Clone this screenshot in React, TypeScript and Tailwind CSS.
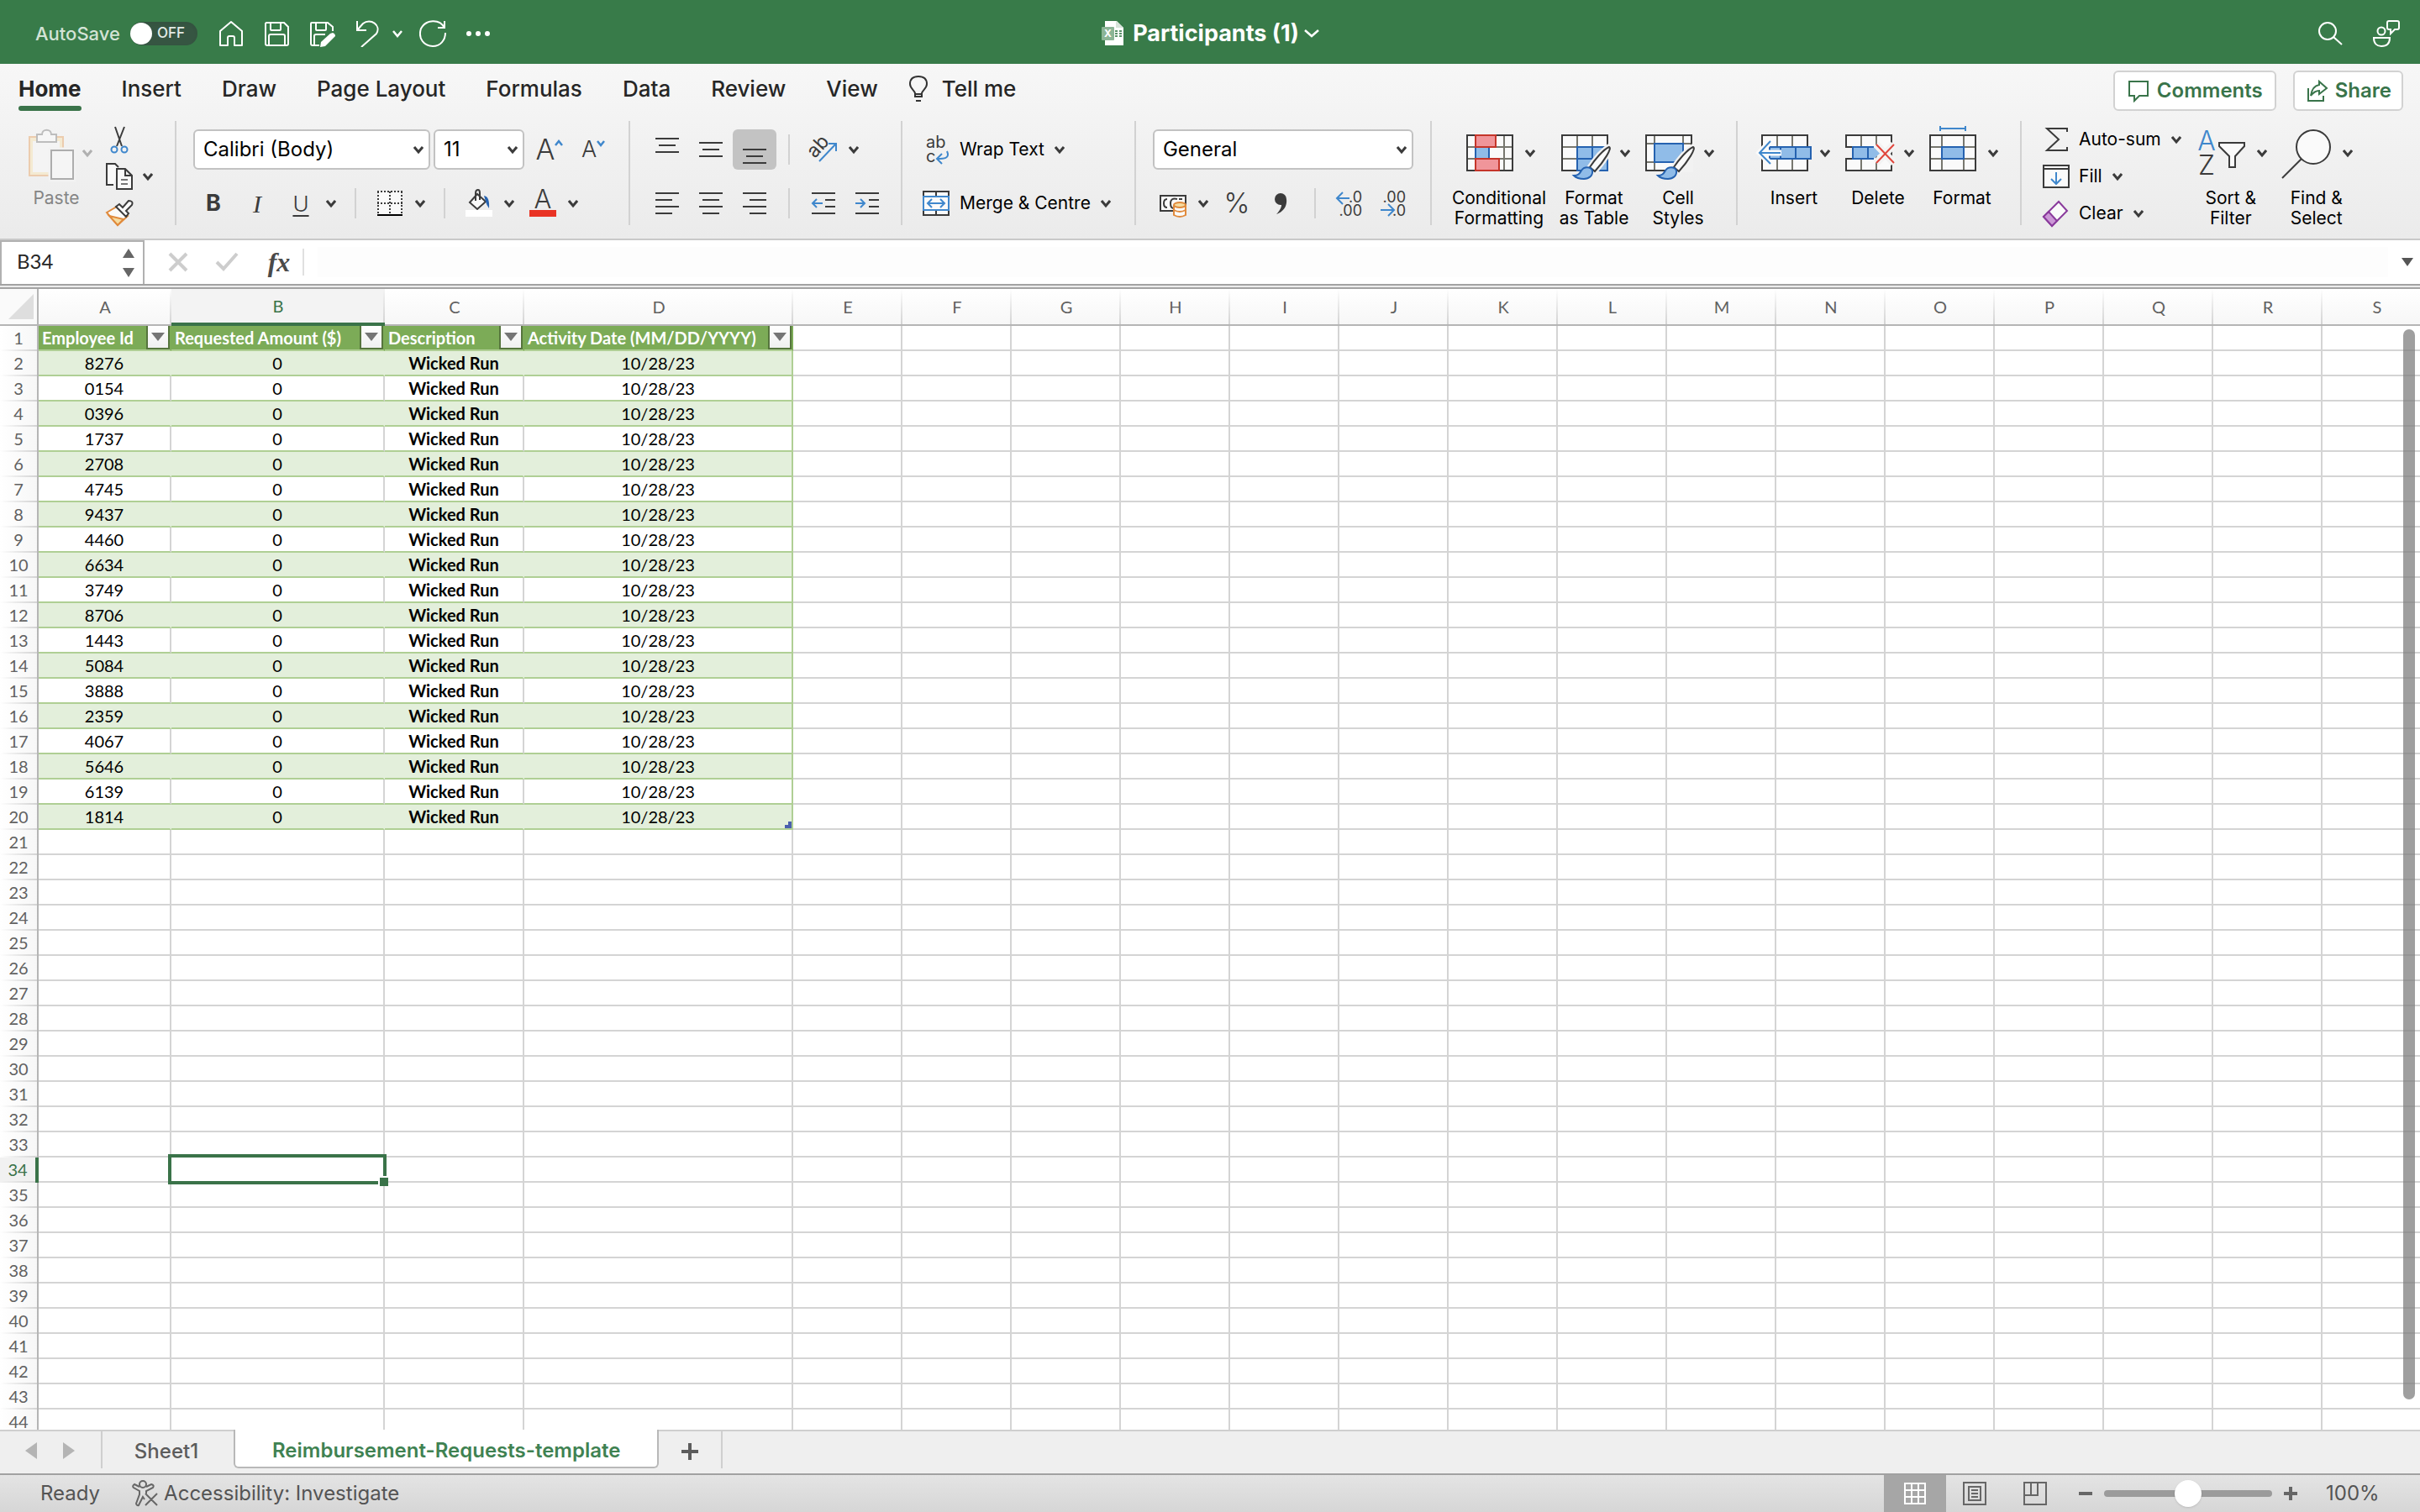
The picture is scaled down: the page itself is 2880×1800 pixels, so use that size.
import type { ReactNode } from 'react';

const ids = [
    '8276', '0154', '0396', '1737', '2708', '4745', '9437', '4460', '6634', '3749',
    '8706', '1443', '5084', '3888', '2359', '4067', '5646', '6139', '1814',
];

const tableHeads = ['Employee Id', 'Requested Amount ($)', 'Description', 'Activity Date (MM/DD/YYYY)'];
const columns = 'ABCDEFGHIJKLMNOPQRS'.split('');
const rows = Array.from({ length: 44 }, (_, i) => i + 1);
const tabs = ['Home', 'Insert', 'Draw', 'Page Layout', 'Formulas', 'Data', 'Review', 'View'];

interface IconProps {
    children: ReactNode;
    big?: boolean;
}

const Icon = ({ children, big }: IconProps) => (
    <svg
        viewBox={big ? '0 0 64 64' : '0 0 32 32'}
        className={big ? 'size-16 shrink-0 overflow-visible' : 'size-8 shrink-0 overflow-visible'}
        fill="none"
        stroke="#3b3b3b"
        strokeWidth="2"
        aria-hidden="true"
    >
        {children}
    </svg>
);

const Chevron = ({ faded }: { faded?: boolean }) => (
    <svg viewBox="0 0 12 12" className="size-3 shrink-0" fill="none" stroke={faded ? '#b0b0b0' : '#3b3b3b'} strokeWidth="3" aria-hidden="true">
        <path d="M1 3l5 6 5-6" />
    </svg>
);

interface ToolProps {
    label: string;
    children: ReactNode;
    active?: boolean;
}

const Tool = ({ label, children, active }: ToolProps) => (
    <button
        aria-label={label}
        className={`flex h-12 w-[52px] shrink-0 items-center justify-center rounded-md text-[#3b3b3b] ${active ? 'bg-[#c3c3c3]' : ''}`}
    >
        {children}
    </button>
);

const More = ({ label }: { label: string }) => (
    <button aria-label={label} className="mr-1 flex h-12 w-5 shrink-0 items-center justify-center">
        <Chevron />
    </button>
);

const Separator = () => <div className="mx-3.5 h-9 w-0.5 shrink-0 bg-[#d2d2d2]" />;

interface BigToolProps {
    icon: ReactNode;
    lines: string[];
    faded?: boolean;
}

const BigTool = ({ icon, lines, faded }: BigToolProps) => (
    <button className={`flex flex-col items-center pt-1.5 text-[21px] leading-6 ${faded ? 'text-[#858585]' : 'text-black'}`}>
        <span className="mb-2.5 flex items-center gap-2.5">
            {icon}
            <Chevron faded={faded} />
        </span>
        {lines.map((line) => (
            <span key={line} className="whitespace-nowrap">{line}</span>
        ))}
    </button>
);

const TextTool = ({ icon, text }: { icon: ReactNode; text: string }) => (
    <button className="flex items-center gap-3 text-[21px] whitespace-nowrap text-black">
        {icon}
        {text}
        <Chevron />
    </button>
);

interface PickerProps {
    label: string;
    value: string;
    width: string;
}

const Picker = ({ label, value, width }: PickerProps) => (
    <div className={`relative flex h-12 shrink-0 items-center ${width}`}>
        <select
            aria-label={label}
            defaultValue={value}
            className="h-full w-full appearance-none rounded-md border-2 border-[#c2c2c2] bg-white pl-2.5 text-2xl text-black"
        >
            <option>{value}</option>
        </select>
        <span className="pointer-events-none absolute right-2">
            <Chevron />
        </span>
    </div>
);

const Lines = ({ rows }: { rows: [number, number, number][] }) => (
    <Icon>
        {rows.map(([y, x1, x2]) => (
            <path key={y} d={`M${x1} ${y}H${x2}`} />
        ))}
    </Icon>
);

const Brush = () => (
    <>
        <path d="M37 51C44 40 53 29 62 24C65 27 55 41 44 54z" fill="#fafafa" stroke="#f2f2f2" strokeWidth="7" />
        <path d="M38 49C44 40 54 28 61 25C65 26 55 42 44 54z" fill="#fafafa" />
        <path d="M19 59C25 59 26 56 28 53C31 48 39 48 41 53C42 59 37 63 31 63C26 63 22 62 19 59z" fill="#90bce8" stroke="#2562b0" />
    </>
);

const TitleBar = () => (
    <header className="grid h-19 shrink-0 grid-cols-[1fr_auto_1fr] items-center bg-[#387b49] pb-1 pt-2 text-white">
        <div className="flex items-center pl-[42px]">
            <span className="mr-3 text-[22px] font-medium text-[#d3e3d6]">AutoSave</span>
            <button role="switch" aria-checked="false" aria-label="AutoSave" className="flex h-7 w-20 items-center gap-1.5 rounded-full bg-[#365542] shadow-inner">
                <span className="size-[26px] rounded-full bg-white" />
                <span className="text-[17px] font-medium text-[#e3eae5]">OFF</span>
            </button>
            <div className="ml-6 flex items-center gap-[22px]">
                <button aria-label="Home">
                    <svg viewBox="0 0 32 32" className="size-8" fill="none" stroke="white" strokeWidth="2">
                        <path d="M3 13L16 2L29 13V30H20V21Q20 19 18 19H14Q12 19 12 21V30H3z" strokeLinejoin="round" />
                    </svg>
                </button>
                <button aria-label="Save">
                    <svg viewBox="0 0 32 32" className="size-8" fill="none" stroke="white" strokeWidth="2">
                        <path d="M4 3H25L30 8V28Q30 30 28 30H5Q3 30 3 28V4zM9 3V11Q9 12 10 12H20Q21 12 21 11V3M7 30V19Q7 17 9 17H24Q26 17 26 19V30" />
                    </svg>
                </button>
                <button aria-label="Save as">
                    <svg viewBox="0 0 32 32" className="size-8" fill="none" stroke="white" strokeWidth="2">
                        <path d="M13 30H5Q3 30 3 28V4Q3 3 4 3H23L29 8V13M9 3V11Q9 12 10 12H20Q21 12 21 11V3M7 30V19Q7 17 9 17H20" />
                        <path d="M29 15Q32 16 32 19L20 31L14 32L15 26L26 16z" fill="white" stroke="none" />
                    </svg>
                </button>
                <button aria-label="Undo">
                    <svg viewBox="0 0 32 32" className="size-8" fill="none" stroke="white" strokeWidth="2">
                        <path d="M4 1V12H15M4 12L11 4C20 -3 33 6 27 16L9 32" />
                    </svg>
                </button>
            </div>
            <button aria-label="Undo history" className="ml-3.5">
                <svg viewBox="0 0 12 12" className="size-3" fill="none" stroke="white" strokeWidth="2.5">
                    <path d="M1 3l5 6 5-6" />
                </svg>
            </button>
            <button aria-label="Repeat" className="ml-5">
                <svg viewBox="0 0 32 32" className="size-8" fill="none" stroke="white" strokeWidth="2">
                    <path d="M30 1V9H22M30 9C24 -2 8 -1 2 10C-2 22 6 31 16 31C25 31 31 24 31 15" />
                </svg>
            </button>
            <button aria-label="More commands" className="ml-6">
                <svg viewBox="0 0 28 6" className="h-1.5 w-7" fill="white">
                    <circle cx="3" cy="3" r="3" />
                    <circle cx="14" cy="3" r="3" />
                    <circle cx="25" cy="3" r="3" />
                </svg>
            </button>
        </div>
        <button className="flex items-center gap-2.5 text-[27px] font-bold">
            <svg viewBox="0 0 28 30" className="h-[30px] w-7" aria-hidden="true">
                <path d="M5 0H19L27 8V29H5z" fill="white" />
                <path d="M18 0L27 8H18z" fill="#d7e4da" />
                <path d="M17 12h3M22 12h3M17 15h3M22 15h3M17 18h3M22 18h3" stroke="#5b9169" strokeWidth="2" />
                <rect x="1" y="7" width="15" height="16" rx="1" fill="#8cb596" />
                <text x="8.5" y="19" fill="white" fontSize="12" fontWeight="700" textAnchor="middle">X</text>
            </svg>
            <span>Participants (1)</span>
            <svg viewBox="0 0 18 12" className="-ml-1 h-3 w-4.5" fill="none" stroke="white" strokeWidth="2.5" aria-hidden="true">
                <path d="M1 2l8 7 8-7" />
            </svg>
        </button>
        <div className="flex items-center justify-end gap-9 pr-6">
            <button aria-label="Search">
                <svg viewBox="0 0 30 30" className="size-[30px]" fill="none" stroke="white" strokeWidth="2">
                    <circle cx="12" cy="12" r="10" />
                    <path d="M19 19L29 28" />
                </svg>
            </button>
            <button aria-label="Collaborate">
                <svg viewBox="0 0 32 32" className="size-8" fill="none" stroke="white" strokeWidth="2">
                    <circle cx="10" cy="13" r="4.5" />
                    <path d="M1 21H20C20 28 16 31 10 31C5 31 1 28 1 21z" />
                    <path d="M19 1H29Q31 1 31 3V9Q31 11 29 11H26L21 16V11H19Q17 11 17 9V3Q17 1 19 1z" />
                </svg>
            </button>
        </div>
    </header>
);

const TabRow = () => (
    <div className="flex h-17 items-start justify-between pr-5 pl-[22px]">
        <nav className="flex items-start gap-12 pt-3.5">
            {tabs.map((tab, index) => (
                <button key={tab} className={`text-[26px] leading-8 whitespace-nowrap text-[#262626] ${index === 0 ? 'font-bold' : 'font-medium'}`}>
                    {tab}
                    {index === 0 && <span className="mt-1 block h-1.5 rounded-full bg-[#3a7349]" />}
                </button>
            ))}
            <button className="-ml-3 flex items-center gap-4 text-[26px] leading-8 font-medium whitespace-nowrap text-[#262626]">
                <svg viewBox="0 0 24 32" className="h-8 w-6" fill="none" stroke="#333" strokeWidth="2" aria-hidden="true">
                    <path d="M8 25V21C7 17 2 15 2 10C2 4 6 1 12 1C18 1 22 4 22 10C22 15 17 17 16 21V25zM8 22H16M9 30H15" />
                </svg>
                Tell me
            </button>
        </nav>
        <div className="flex gap-5 pt-2">
            <button className="flex h-12 items-center gap-2 rounded-md border-2 border-[#d2d2d2] bg-white px-3.5 text-2xl font-semibold text-[#39744a]">
                <svg viewBox="0 0 28 28" className="size-7" fill="none" stroke="#39744a" strokeWidth="2" aria-hidden="true">
                    <path d="M3 3H25V20H15L9 26V20H3z" />
                </svg>
                Comments
            </button>
            <button className="flex h-12 items-center gap-2 rounded-md border-2 border-[#d2d2d2] bg-white px-3 text-2xl font-semibold text-[#39744a]">
                <svg viewBox="0 0 28 28" className="size-7" fill="none" stroke="#39744a" strokeWidth="2" aria-hidden="true">
                    <path d="M4 11V26H22V20M17 3L26 11L17 18V14C13 14 10 16 7 20C8 13 11 8 17 7z" />
                </svg>
                Share
            </button>
        </div>
    </div>
);

const Clipboard = () => (
    <section className="flex gap-4 pr-[26px] pl-6">
        <BigTool
            faded
            lines={['Paste']}
            icon={
                <Icon big>
                    <path d="M11 13H51V59H11z" fill="#f4ead2" stroke="#ecccae" />
                    <path d="M15 18H47V55H15z" fill="#f4f4f4" stroke="none" />
                    <path d="M20 10H26C26 3 37 3 37 10H43V19H20z" fill="#f6f6f6" stroke="#bdbdbd" />
                    <path d="M37 29H63V63H37z" fill="#f5f5f5" stroke="#f2f2f2" strokeWidth="7" />
                    <path d="M37 29H63V63H37z" fill="#f5f5f5" stroke="#adadad" />
                </Icon>
            }
        />
        <div className="flex flex-col *:h-11 *:shrink-0">
            <button aria-label="Cut" className="flex items-center">
                <Icon>
                    <path d="M11 1L19 24M22 1L13 24" />
                    <circle cx="10" cy="28" r="3.5" stroke="#3f87cc" />
                    <circle cx="22" cy="28" r="3.5" stroke="#3f87cc" />
                </Icon>
            </button>
            <button aria-label="Copy" className="flex items-center gap-3">
                <Icon>
                    <path d="M9 26H1V1H11L15 5" fill="#fafafa" />
                    <path d="M13 7H23L31 15V31H13zM23 7V15H31" fill="#fafafa" />
                    <path d="M18 20H26M18 25H26" stroke="#777" />
                </Icon>
                <Chevron />
            </button>
            <button aria-label="Format painter" className="flex items-center">
                <Icon>
                    <path d="M1 15L13 8L26 19L14 30z" fill="#fafafa" stroke="#e08a3c" />
                    <path d="M4 19L21 23L14 30z" fill="#f6dca0" stroke="#e08a3c" />
                    <path d="M12 8L16 5L20 9L27 1Q33 1 31 6L24 13L27 16L24 20z" fill="#fafafa" />
                </Icon>
            </button>
        </div>
    </section>
);

const FontGroup = () => (
    <section className="flex flex-col gap-4 pt-2.5 pr-4 pl-[18px]">
        <div className="flex items-center">
            <div className="mr-1 ml-0.5 flex gap-1">
                <Picker label="Font" value="Calibri (Body)" width="w-[282px]" />
                <Picker label="Font size" value="11" width="w-[108px]" />
            </div>
            <Tool label="Increase font size">
                <span className="text-[34px] leading-8 font-light">A</span>
                <svg viewBox="0 0 10 24" className="h-6 w-2.5" fill="none" stroke="#3f87cc" strokeWidth="2.5">
                    <path d="M1 7l4-5 4 5" />
                </svg>
            </Tool>
            <Tool label="Decrease font size">
                <span className="text-[27px] leading-8 font-light">A</span>
                <svg viewBox="0 0 10 24" className="h-6 w-2.5" fill="none" stroke="#3f87cc" strokeWidth="2.5">
                    <path d="M1 2l4 5 4-5" />
                </svg>
            </Tool>
        </div>
        <div className="flex items-center">
            <Tool label="Bold"><span className="text-[27px] font-bold">B</span></Tool>
            <Tool label="Italic"><span className="font-['Liberation_Serif',serif] text-[30px] italic">I</span></Tool>
            <Tool label="Underline"><span className="text-[26px] font-light underline decoration-2 underline-offset-4">U</span></Tool>
            <More label="Underline options" />
            <Separator />
            <Tool label="Borders">
                <Icon>
                    <path d="M2 2H30V30H2z" fill="#fafafa" stroke="none" />
                    <path d="M1 2H31M2 2V28M30 2V28M16 2V28M1 16H31" strokeDasharray="2 2" />
                    <path d="M1 30H31" stroke="black" />
                </Icon>
            </Tool>
            <More label="Border options" />
            <Separator />
            <Tool label="Fill colour">
                <Icon>
                    <path d="M14 5L5 15L14 23L24 14z" fill="#fafafa" />
                    <path d="M12 13V4Q12 0 15 0Q17 0 17 4V12" />
                    <path d="M22 7Q29 8 28 22Q25 18 24 14z" fill="#2562b0" stroke="none" />
                    <path d="M0 28H32" stroke="white" strokeWidth="8" />
                </Icon>
            </Tool>
            <More label="Fill colour options" />
            <Tool label="Font colour">
                <Icon>
                    <text x="16" y="22" fill="#3b3b3b" stroke="none" fontSize="31" fontWeight="300" textAnchor="middle">A</text>
                    <path d="M0 28H32" stroke="#e93324" strokeWidth="8" />
                </Icon>
            </Tool>
            <More label="Font colour options" />
        </div>
    </section>
);

const AlignGroup = () => (
    <section className="flex flex-col gap-4 pt-2.5 pr-3.5 pl-[18px]">
        <div className="flex items-center">
            <Tool label="Align top"><Lines rows={[[3, 2, 30], [11, 6, 26], [19, 2, 30]]} /></Tool>
            <Tool label="Align middle"><Lines rows={[[8, 2, 30], [16, 6, 26], [24, 2, 30]]} /></Tool>
            <Tool label="Align bottom" active><Lines rows={[[16, 2, 30], [24, 6, 26], [32, 2, 30]]} /></Tool>
            <Separator />
            <Tool label="Orientation">
                <Icon>
                    <text x="3" y="25" fill="#3b3b3b" stroke="none" fontSize="23" transform="rotate(-48 7 23)">ab</text>
                    <path d="M11 30L31 9M22 9H31V18" stroke="#3f87cc" />
                </Icon>
            </Tool>
            <More label="Orientation options" />
        </div>
        <div className="flex items-center">
            <Tool label="Align left"><Lines rows={[[4, 2, 30], [12, 2, 22], [20, 2, 30], [28, 2, 22]]} /></Tool>
            <Tool label="Centre"><Lines rows={[[4, 2, 30], [12, 6, 26], [20, 2, 30], [28, 6, 26]]} /></Tool>
            <Tool label="Align right"><Lines rows={[[4, 2, 30], [12, 10, 30], [20, 2, 30], [28, 10, 30]]} /></Tool>
            <Separator />
            <Tool label="Decrease indent">
                <Icon>
                    <path d="M2 4H30M18 12H30M18 20H30M2 28H30" />
                    <path d="M15 16H4M8 11L3 16L8 21" stroke="#3f87cc" />
                </Icon>
            </Tool>
            <Tool label="Increase indent">
                <Icon>
                    <path d="M2 4H30M18 12H30M18 20H30M2 28H30" />
                    <path d="M2 16H13M8 11L13 16L8 21" stroke="#3f87cc" />
                </Icon>
            </Tool>
        </div>
    </section>
);

const WrapGroup = () => (
    <section className="flex flex-col gap-4 pt-2.5 pr-7 pl-6">
        <div className="flex h-12 items-center">
            <TextTool
                text="Wrap Text"
                icon={
                    <Icon>
                        <text x="4" y="14" fill="#3b3b3b" stroke="none" fontSize="20">ab</text>
                        <text x="4" y="31" fill="#3b3b3b" stroke="none" fontSize="20">c</text>
                        <path d="M29 18C33 27 25 27 17 27M23 21L17 27L23 33" stroke="#3f87cc" />
                    </Icon>
                }
            />
        </div>
        <div className="flex h-12 items-center">
            <TextTool
                text="Merge & Centre"
                icon={
                    <Icon>
                        <path d="M1 2H31V30H1zM16 2V30" fill="#fafafa" />
                        <path d="M1 8H31V24H1z" fill="#fafafa" stroke="#3f87cc" />
                        <path d="M6 16H26M11 11L6 16L11 21M21 11L26 16L21 21" stroke="#3f87cc" />
                    </Icon>
                }
            />
        </div>
    </section>
);

const NumberGroup = () => (
    <section className="flex flex-col gap-4 px-5 pt-2.5">
        <Picker label="Number format" value="General" width="w-[310px]" />
        <div className="-mx-0.5 flex items-center">
            <Tool label="Accounting format">
                <Icon>
                    <path d="M1 7H31V25H1z" fill="#fafafa" />
                    <path d="M9 11Q5 11 5 16Q5 21 9 21M21 11Q13 9 13 16Q13 21 16 22M23 11H27" />
                    <path d="M17 18V30Q24 34 31 30V18" fill="#fafafa" stroke="#e08a3c" />
                    <ellipse cx="24" cy="18" rx="7" ry="3" fill="#f6dca0" stroke="#e08a3c" />
                    <path d="M17 24Q24 28 31 24" stroke="#e08a3c" />
                </Icon>
            </Tool>
            <More label="Accounting options" />
            <Tool label="Percent"><span className="text-[33px] font-light">%</span></Tool>
            <Tool label="Comma style">
                <Icon>
                    <circle cx="16" cy="11" r="7" fill="#3b3b3b" stroke="none" />
                    <path d="M23 11C24 20 19 26 11 29C15 25 18 20 17 15z" fill="#3b3b3b" stroke="none" />
                </Icon>
            </Tool>
            <Separator />
            <Tool label="Increase decimal">
                <Icon>
                    <text x="31" y="15" fill="#3b3b3b" stroke="none" fontSize="18" textAnchor="end">.0</text>
                    <text x="31" y="31" fill="#3b3b3b" stroke="none" fontSize="18" textAnchor="end">.00</text>
                    <path d="M16 10H1M8 3L1 10L8 17" stroke="#3f87cc" />
                </Icon>
            </Tool>
            <Tool label="Decrease decimal">
                <Icon>
                    <text x="31" y="15" fill="#3b3b3b" stroke="none" fontSize="18" textAnchor="end">.00</text>
                    <text x="31" y="31" fill="#3b3b3b" stroke="none" fontSize="18" textAnchor="end">.0</text>
                    <path d="M1 24H17M10 17L17 24L10 31" stroke="#3f87cc" />
                </Icon>
            </Tool>
        </div>
    </section>
);

const StylesGroup = () => (
    <section className="flex gap-3.5 pr-[26px] pl-6">
        <BigTool
            lines={['Conditional', 'Formatting']}
            icon={
                <Icon big>
                    <path d="M5 11H59V53H5z" fill="#fafafa" stroke="none" />
                    <path d="M5 25H59M5 39H59M15 11V53M49 11V53" stroke="#77776f" />
                    <path d="M5 11H59V53H5z" />
                    <path d="M15 25H31V39H15z" fill="#90bce8" stroke="#2562b0" />
                    <path d="M15 11H39V25H15zM15 39H43V53H15z" fill="#f0959a" stroke="#c5352a" />
                </Icon>
            }
        />
        <BigTool
            lines={['Format', 'as Table']}
            icon={
                <Icon big>
                    <path d="M5 11H59V53H5z" fill="#fafafa" stroke="none" />
                    <path d="M5 25H59M5 39H59M23 11V53M41 11V53" stroke="#77776f" />
                    <path d="M5 11H59V53H5z" />
                    <path d="M23 25H59V53H23zM23 39H59M41 25V53" fill="#90bce8" stroke="#2562b0" />
                    <Brush />
                </Icon>
            }
        />
        <BigTool
            lines={['Cell', 'Styles']}
            icon={
                <Icon big>
                    <path d="M5 11H59V53H5z" fill="#fafafa" stroke="none" />
                    <path d="M5 21H59M5 43H59M15 11V53M49 11V53" stroke="#77776f" />
                    <path d="M5 11H59V53H5z" />
                    <path d="M15 21H49V43H15z" fill="#90bce8" stroke="#2562b0" />
                    <path d="M61 30V55H40z" fill="#f2f2f2" stroke="none" />
                    <Brush />
                </Icon>
            }
        />
    </section>
);

const CellsGroup = () => (
    <section className="flex gap-3.5 pr-[26px] pl-6">
        <BigTool
            lines={['Insert']}
            icon={
                <Icon big>
                    <path d="M5 11H59V53H5z" fill="#fafafa" />
                    <path d="M23 12V52M41 12V52" stroke="#77776f" />
                    <path d="M14 25H63V39H14z" fill="#90bce8" stroke="#2562b0" />
                    <path d="M27 25V39M45 25V39" stroke="#2562b0" />
                    <path d="M28 32H2M15 18L2 32L15 45" stroke="#fafafa" strokeWidth="7" />
                    <path d="M27 32H2M15 18L2 32L15 45" stroke="#3f87cc" />
                </Icon>
            }
        />
        <BigTool
            lines={['Delete']}
            icon={
                <Icon big>
                    <path d="M5 25V11H59V53H5V39H14V25z" fill="#fafafa" />
                    <path d="M23 12V52M41 12V52" stroke="#77776f" />
                    <path d="M13 25H38L46 32L38 39H13z" fill="#90bce8" stroke="none" />
                    <path d="M38 25H13V39H38M31 25V39" stroke="#2562b0" />
                    <path d="M41 22L62 44M62 22L41 44" stroke="#f3f3f3" strokeWidth="9" />
                    <path d="M41 22L62 44M62 22L41 44" stroke="#e0463c" />
                </Icon>
            }
        />
        <BigTool
            lines={['Format']}
            icon={
                <Icon big>
                    <path d="M5 11H59V53H5z" fill="#fafafa" stroke="none" />
                    <path d="M5 25H59M5 39H59M19 11V53M45 11V53" stroke="#77776f" />
                    <path d="M5 11H59V53H5z" />
                    <path d="M19 25H45V39H19z" fill="#90bce8" stroke="#2562b0" />
                    <path d="M17 3H47M17 0V6M47 0V6" stroke="#3f87cc" />
                </Icon>
            }
        />
    </section>
);

const EditingGroup = () => (
    <section className="flex gap-4 px-6">
        <div className="flex flex-col *:h-11 *:shrink-0">
            <TextTool
                text="Auto-sum"
                icon={<Icon><path d="M30 7V3H6L20 16L6 29H30V25" /></Icon>}
            />
            <TextTool
                text="Fill"
                icon={
                    <Icon>
                        <path d="M2 3H32V29H2z" fill="#fafafa" />
                        <path d="M2 7H32" />
                        <path d="M17 11V25M11 19L17 25L23 19" stroke="#3f87cc" />
                    </Icon>
                }
            />
            <TextTool
                text="Clear"
                icon={
                    <Icon>
                        <path d="M2 20L20 2L30 13L12 31z" fill="#fafafa" stroke="#8a3a9c" />
                        <path d="M2 20L8 14L18 25L12 31z" fill="#cb97d6" stroke="#8a3a9c" />
                    </Icon>
                }
            />
        </div>
        <BigTool
            lines={['Sort &', 'Filter']}
            icon={
                <Icon big>
                    <text x="14" y="29" fill="#3f87cc" stroke="none" fontSize="32" fontWeight="300" textAnchor="middle">A</text>
                    <text x="14" y="58" fill="#3b3b3b" stroke="none" fontSize="32" fontWeight="300" textAnchor="middle">Z</text>
                    <path d="M29 20H59V24L48 36V49H41V36L29 24z" fill="#fafafa" />
                </Icon>
            }
        />
        <BigTool
            lines={['Find &', 'Select']}
            icon={
                <Icon big>
                    <circle cx="39" cy="25" r="20" fill="#fafafa" />
                    <path d="M25 39L2 62" />
                </Icon>
            }
        />
    </section>
);

const FormulaBar = () => (
    <div className="flex h-13 shrink-0 items-center bg-white">
        <div className="flex h-full w-[172px] items-center justify-between border-2 border-b-0 border-[#b1b1b1] pr-2.5 pl-[18px]">
            <input aria-label="Name box" defaultValue="B34" className="w-20 pb-1 font-['Lato',sans-serif] text-2xl text-[#262626] outline-none" />
            <svg viewBox="0 0 14 36" className="h-9 w-3.5" fill="#666" aria-hidden="true">
                <path d="M7 1L14 12H0zM7 35L14 24H0z" />
            </svg>
        </div>
        <button aria-label="Cancel" className="ml-7">
            <svg viewBox="0 0 24 24" className="size-6" stroke="#cdcdcd" strokeWidth="4">
                <path d="M2 2L22 22M22 2L2 22" />
            </svg>
        </button>
        <button aria-label="Enter" className="ml-8">
            <svg viewBox="0 0 28 24" className="h-6 w-7" fill="none" stroke="#cdcdcd" strokeWidth="4">
                <path d="M2 12L10 20L26 2" />
            </svg>
        </button>
        <button aria-label="Insert function" className="ml-8 w-8 font-['Liberation_Serif',serif] text-[32px] leading-9 font-bold text-[#4a4a4a] italic">
            fx
        </button>
        <div className="ml-3 h-8 w-0.5 bg-[#e0e0e0]" />
        <input aria-label="Formula" className="mx-4 h-9 min-w-0 flex-1 bg-[#fdfdfd] outline-none" />
        <button aria-label="Expand formula bar" className="pr-2">
            <svg viewBox="0 0 14 10" className="h-2.5 w-3.5" fill="#555">
                <path d="M0 0H14L7 10z" />
            </svg>
        </button>
    </div>
);

const HeadCell = ({ text }: { text: string }) => (
    <td className="border-r-2 border-b-2 border-r-[#7cab57] border-b-[#afcf94] bg-[#7cab57] p-0 font-bold text-white">
        <div className="flex h-7 items-center justify-between pl-1">
            <span className="whitespace-nowrap">{text}</span>
            <button aria-label={`Filter ${text}`} className="flex h-7 w-7 items-center justify-center border-r-2 border-b-2 border-l-2 border-[#56753d] bg-linear-to-b from-white to-[#f0f0f0]">
                <svg viewBox="0 0 16 10" className="h-2.5 w-4" fill="#757575">
                    <path d="M0 0H16L8 10z" />
                </svg>
            </button>
        </div>
    </td>
);

const Row = ({ n }: { n: number }) => {
    const inTable = n >= 2 && n <= 20;
    const banded = n % 2 === 0;
    const values = inTable ? [ids[n - 2], '0', 'Wicked Run', '10/28/23'] : [];

    return (
        <tr className="h-[30px]">
            <th
                scope="row"
                className={`relative p-0 pb-0.5 text-center font-normal after:absolute after:inset-x-0 after:bottom-0 after:h-0.5 after:bg-linear-to-r after:from-transparent after:to-[#d4d4d4] ${
                    n === 34 ? 'border-r-4 border-[#3a7349] bg-[#f1f1f1] text-[#3a7349]' : 'border-r-2 border-[#b5b5b5] bg-linear-to-r from-white to-[#f7f7f7] text-[#616161]'
                }`}
            >
                {n}
            </th>
            {columns.map((col, i) => {
                if (n === 1 && i < 4) return <HeadCell key={col} text={tableHeads[i]} />;
                if (inTable && i < 4) {
                    return (
                        <td
                            key={col}
                            className={`relative border-r-2 border-b-2 border-b-[#afcf94] p-0 text-center ${banded ? 'bg-[#e3efdb]' : ''} ${
                                i === 3 ? 'border-r-[#afcf94]' : banded ? 'border-r-[#e3efdb]' : 'border-r-[#d4d4d4]'
                            } ${i === 2 ? 'font-bold' : ''}`}
                        >
                            {values[i]}
                            {n === 20 && i === 3 && (
                                <svg viewBox="0 0 8 8" className="absolute right-0 bottom-0 size-2" fill="#4a5fae">
                                    <path d="M4 0H8V8H0V4H4z" />
                                </svg>
                            )}
                        </td>
                    );
                }
                return (
                    <td key={col} className="relative border-r-2 border-b-2 border-[#d4d4d4] p-0">
                        {n === 34 && col === 'B' && (
                            <div className="absolute -inset-1 z-10 border-4 border-[#3a7349]">
                                <div className="absolute -right-1.5 -bottom-1.5 size-3 border-t-2 border-l-2 border-white bg-[#3a7349]" />
                            </div>
                        )}
                    </td>
                );
            })}
        </tr>
    );
};

const Sheet = () => (
    <main className="relative min-h-0 flex-1 overflow-hidden bg-white">
        <table className="w-max table-fixed border-separate border-spacing-0 font-['Lato',sans-serif] text-xl leading-7 text-black">
            <colgroup>
                <col className="w-[46px]" />
                <col className="w-[158px]" />
                <col className="w-[254px]" />
                <col className="w-[166px]" />
                <col className="w-[320px]" />
                {columns.slice(4).map((col) => (
                    <col key={col} className="w-[130px]" />
                ))}
            </colgroup>
            <thead>
                <tr className="h-11">
                    <th className="border-r-2 border-b-2 border-[#b5b5b5] bg-[#fafafa] p-0">
                        <button aria-label="Select all" className="flex w-full justify-end pr-1">
                            <svg viewBox="0 0 30 30" className="size-[30px]" fill="#dedede">
                                <path d="M30 0V30H0z" />
                            </svg>
                        </button>
                    </th>
                    {columns.map((col) => (
                        <th
                            key={col}
                            scope="col"
                            className={`relative p-0 text-center font-normal after:absolute after:inset-y-0 after:right-0 after:w-0.5 after:bg-linear-to-b after:from-transparent after:to-[#d4d4d4] ${
                                col === 'B'
                                    ? 'border-b-4 border-[#3a7349] bg-[#f3f3f3] text-[#3a7349]'
                                    : 'border-b-2 border-[#b5b5b5] bg-linear-to-b from-white to-[#f7f7f7] text-[#616161]'
                            }`}
                        >
                            {col}
                        </th>
                    ))}
                </tr>
            </thead>
            <tbody>
                {rows.map((n) => (
                    <Row key={n} n={n} />
                ))}
            </tbody>
        </table>
        <div className="absolute top-12 right-1.5 bottom-9 z-20 w-3.5 rounded-full bg-[#7f7f7f]/75" />
    </main>
);

const SheetTabs = () => (
    <div className="flex h-13 shrink-0 bg-[#efefef] text-2xl text-[#5c5c5c]">
        <div className="flex items-center gap-[31px] border-t-2 border-[#cfcfcf] pr-[31px] pb-1 pl-[30px]">
            <button aria-label="Previous sheet">
                <svg viewBox="0 0 14 20" className="h-5 w-3.5" fill="#b4b4b4"><path d="M14 0V20L0 10z" /></svg>
            </button>
            <button aria-label="Next sheet">
                <svg viewBox="0 0 14 20" className="h-5 w-3.5" fill="#b4b4b4"><path d="M0 0V20L14 10z" /></svg>
            </button>
        </div>
        <div className="flex border-t-2 border-[#cfcfcf] pb-1.5">
            <button className="w-[158px] border-l-2 border-[#cfcfcf] pt-1 pr-1 font-medium">Sheet1</button>
        </div>
        <button className="mb-1.5 rounded-b-md border-x-2 border-b-2 border-[#b8b8b8] bg-white px-11 pt-1.5 font-semibold whitespace-nowrap text-[#3f8252]">
            Reimbursement-Requests-template
        </button>
        <div className="flex flex-1 border-t-2 border-[#cfcfcf] pb-1.5">
            <button aria-label="New sheet" className="flex w-[76px] items-center justify-center border-r-2 border-[#cfcfcf] pt-1">
                <svg viewBox="0 0 20 20" className="size-5" stroke="#5c5c5c" strokeWidth="4"><path d="M0 10H20M10 0V20" /></svg>
            </button>
        </div>
    </div>
);

const StatusBar = () => (
    <footer className="flex h-[46px] shrink-0 items-center justify-between border-t-2 border-[#a1a1a1] bg-linear-to-b from-[#e4e4e4] to-[#d6d6d6] text-2xl text-[#545454]">
        <div className="flex items-center pl-12">
            <span>Ready</span>
            <button className="ml-[38px] flex items-center gap-1.5">
                <svg viewBox="0 0 32 32" className="size-8" fill="none" stroke="#666" strokeWidth="2" aria-hidden="true">
                    <circle cx="13" cy="5" r="4" />
                    <path d="M9 8L3 5Q0 7 2 9L9 13V17L5 28Q6 31 8 30L13 20L15 23M17 8L23 5Q27 6 25 9L17 13V16M16 16L30 30M30 16L16 30" />
                </svg>
                Accessibility: Investigate
            </button>
        </div>
        <div className="flex h-full items-center">
            <button aria-label="Normal view" className="flex h-full w-[74px] items-center justify-center bg-[#a6a6a6]">
                <svg viewBox="0 0 26 26" className="size-[26px]" fill="none" stroke="white" strokeWidth="2">
                    <path d="M1 1H25V25H1zM9 1V25M17 1V25M1 9H25M1 17H25" />
                </svg>
            </button>
            <button aria-label="Page layout view" className="ml-5">
                <svg viewBox="0 0 28 28" className="size-7" fill="none" stroke="#666" strokeWidth="2">
                    <path d="M1 1H27V27H1zM7 6H21V22H7zM10 10H18M10 14H18M10 18H18" />
                </svg>
            </button>
            <button aria-label="Page break view" className="ml-11">
                <svg viewBox="0 0 28 28" className="size-7" fill="none" stroke="#666" strokeWidth="2">
                    <path d="M1 1H27V27H1zM1 16H17V1M9 1V16" />
                </svg>
            </button>
            <button aria-label="Zoom out" className="ml-[38px]">
                <svg viewBox="0 0 16 16" className="size-4" stroke="#666" strokeWidth="4"><path d="M0 8H16" /></svg>
            </button>
            <input
                type="range"
                aria-label="Zoom"
                defaultValue={50}
                className="mx-3.5 h-2 w-[200px] appearance-none rounded-full bg-[#9b9b9b] [&::-webkit-slider-thumb]:size-8 [&::-webkit-slider-thumb]:appearance-none [&::-webkit-slider-thumb]:rounded-full [&::-webkit-slider-thumb]:bg-white [&::-webkit-slider-thumb]:shadow"
            />
            <button aria-label="Zoom in">
                <svg viewBox="0 0 16 16" className="size-4" stroke="#666" strokeWidth="4"><path d="M0 8H16M8 0V16" /></svg>
            </button>
            <span className="w-[146px] pl-[34px]">100%</span>
        </div>
    </footer>
);

export default function App() {
    return (
        <div className="flex h-screen flex-col overflow-hidden font-['Inter',sans-serif]">
            <TitleBar />
            <div className="shrink-0 border-b-2 border-[#c9c9c9] bg-linear-to-b from-[#f7f7f7] to-[#ebebeb] pb-4">
                <TabRow />
                <div className="flex h-31 divide-x-2 divide-[#d2d2d2]">
                    <Clipboard />
                    <FontGroup />
                    <AlignGroup />
                    <WrapGroup />
                    <NumberGroup />
                    <StylesGroup />
                    <CellsGroup />
                    <EditingGroup />
                </div>
            </div>
            <FormulaBar />
            <div className="h-1.5 shrink-0 border-y-2 border-[#a3a3a3] bg-[#ececec]" />
            <Sheet />
            <SheetTabs />
            <StatusBar />
        </div>
    );
}
